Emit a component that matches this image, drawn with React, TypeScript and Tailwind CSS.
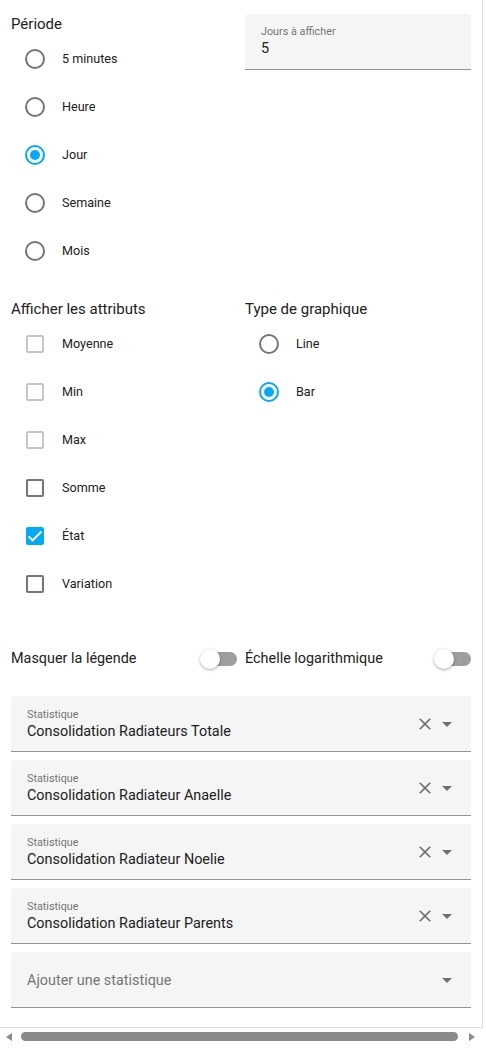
import React from "react";

const periods = [
    { label: "5 minutes", checked: false },
    { label: "Heure", checked: false },
    { label: "Jour", checked: true },
    { label: "Semaine", checked: false },
    { label: "Mois", checked: false },
];

const attributes = [
    { label: "Moyenne", checked: false, disabled: true },
    { label: "Min", checked: false, disabled: true },
    { label: "Max", checked: false, disabled: true },
    { label: "Somme", checked: false, disabled: false },
    { label: "État", checked: true, disabled: false },
    { label: "Variation", checked: false, disabled: false },
];

const statistics = [
    "Consolidation Radiateurs Totale",
    "Consolidation Radiateur Anaelle",
    "Consolidation Radiateur Noelie",
    "Consolidation Radiateur Parents",
];

function Radio({ label, checked }: { label: string; checked: boolean }) {
    return (
        <div className="h-12 flex items-center">
            <div
                className={`ml-[14px] w-5 h-5 rounded-full border-2 flex items-center justify-center shrink-0 ${
                    checked ? "border-[#03a9f4]" : "border-[#757575]"
                }`}
            >
                {checked && <div className="w-[10px] h-[10px] rounded-full bg-[#03a9f4]" />}
            </div>
            <span className="ml-[17px] text-[12.6px] text-[#212121]">{label}</span>
        </div>
    );
}

function Checkbox({
    label,
    checked,
    disabled,
}: {
    label: string;
    checked: boolean;
    disabled: boolean;
}) {
    return (
        <div className="h-12 flex items-center">
            {checked ? (
                <div className="ml-[15px] w-[18px] h-[18px] rounded-[2px] bg-[#03a9f4] flex items-center justify-center shrink-0">
                    <svg width="16" height="16" viewBox="0 0 24 24">
                        <path
                            d="M2.5,12.6 8.4,18.5 21.6,5.3"
                            fill="none"
                            stroke="white"
                            strokeWidth="3"
                        />
                    </svg>
                </div>
            ) : (
                <div
                    className={`ml-[15px] w-[18px] h-[18px] rounded-[2px] border-2 shrink-0 ${
                        disabled ? "border-[#c4c4c4]" : "border-[#757575]"
                    }`}
                />
            )}
            <span className="ml-[18px] text-[12.6px] text-[#212121]">{label}</span>
        </div>
    );
}

function Switch() {
    return (
        <div className="relative w-[37px] h-5 shrink-0">
            <div className="absolute right-0 top-[3px] w-[34px] h-[14px] rounded-full bg-[#9e9e9e]" />
            <div className="absolute left-0 top-0 w-5 h-5 rounded-full bg-white shadow-[0_1px_3px_rgba(0,0,0,0.35)]" />
        </div>
    );
}

function SectionTitle({ children }: { children: React.ReactNode }) {
    return (
        <div className="h-[22px] leading-[22px] text-[15px] text-[#212121]">{children}</div>
    );
}

function StatField({ value }: { value?: string }) {
    return (
        <div className="h-14 rounded-t bg-[#f5f5f5] border-b border-[#949494] flex items-center pl-4 pr-3">
            <div className="flex-1 min-w-0">
                {value ? (
                    <div className="flex flex-col pt-[1px]">
                        <span className="text-[10.8px] leading-[14px] text-[#757575]">
                            Statistique
                        </span>
                        <span className="text-[14.4px] leading-[19px] text-[#212121]">{value}</span>
                    </div>
                ) : (
                    <span className="text-[14.4px] text-[#757575]">Ajouter une statistique</span>
                )}
            </div>
            {value && (
                <svg width="20" height="20" viewBox="0 0 24 24" className="shrink-0">
                    <path
                        fill="#707070"
                        d="M19,6.41L17.59,5L12,10.59L6.41,5L5,6.41L10.59,12L5,17.59L6.41,19L12,13.41L17.59,19L19,17.59L13.41,12L19,6.41Z"
                    />
                </svg>
            )}
            <svg width="24" height="24" viewBox="0 0 24 24" className="shrink-0">
                <path fill="#707070" d="M7,10L12,15L17,10H7Z" />
            </svg>
        </div>
    );
}

export default function App() {
    return (
        <div className="w-[486px] h-[1064px] bg-white font-[Roboto,sans-serif]">
            <div className="w-[483px] border-r border-b border-[#e0e0e0] pl-[11px] pr-[11px] pt-[13px] pb-[19px]">
                <div className="grid grid-cols-2 gap-x-2">
                    <div>
                        <SectionTitle>Période</SectionTitle>
                        {periods.map((p) => (
                            <Radio key={p.label} label={p.label} checked={p.checked} />
                        ))}
                    </div>
                    <div className="pt-[1px]">
                        <div className="h-14 rounded-t bg-[#f5f5f5] border-b border-[#949494] px-4 pt-[11px] flex flex-col">
                            <span className="text-[10.8px] leading-[14px] text-[#757575]">
                                Jours à afficher
                            </span>
                            <span className="text-[14.4px] leading-[20px] text-[#212121]">5</span>
                        </div>
                    </div>
                </div>

                <div className="grid grid-cols-2 gap-x-2 mt-[23px]">
                    <div>
                        <SectionTitle>Afficher les attributs</SectionTitle>
                        {attributes.map((a) => (
                            <Checkbox
                                key={a.label}
                                label={a.label}
                                checked={a.checked}
                                disabled={a.disabled}
                            />
                        ))}
                    </div>
                    <div>
                        <SectionTitle>Type de graphique</SectionTitle>
                        <Radio label="Line" checked={false} />
                        <Radio label="Bar" checked={true} />
                    </div>
                </div>

                <div className="grid grid-cols-2 gap-x-2 mt-[27px] h-12">
                    <div className="flex items-center justify-between">
                        <span className="text-[14.4px] text-[#212121]">Masquer la légende</span>
                        <Switch />
                    </div>
                    <div className="flex items-center justify-between">
                        <span className="text-[14.4px] text-[#212121]">Échelle logarithmique</span>
                        <Switch />
                    </div>
                </div>

                <div className="mt-[13px] flex flex-col gap-2">
                    {statistics.map((s) => (
                        <StatField key={s} value={s} />
                    ))}
                    <StatField />
                </div>
            </div>

            <div className="w-[483px] h-[17px] flex items-center pl-[6px]">
                <svg width="6" height="8" viewBox="0 0 6 8" className="shrink-0">
                    <polygon points="6,0 6,8 0,4" fill="#8a8a8a" />
                </svg>
                <div className="ml-[9px] w-[437px] h-[9px] rounded-full bg-[#8a8a8a]" />
                <svg width="6" height="8" viewBox="0 0 6 8" className="ml-[11px] shrink-0">
                    <polygon points="0,0 6,4 0,8" fill="#8a8a8a" />
                </svg>
            </div>
        </div>
    );
}
